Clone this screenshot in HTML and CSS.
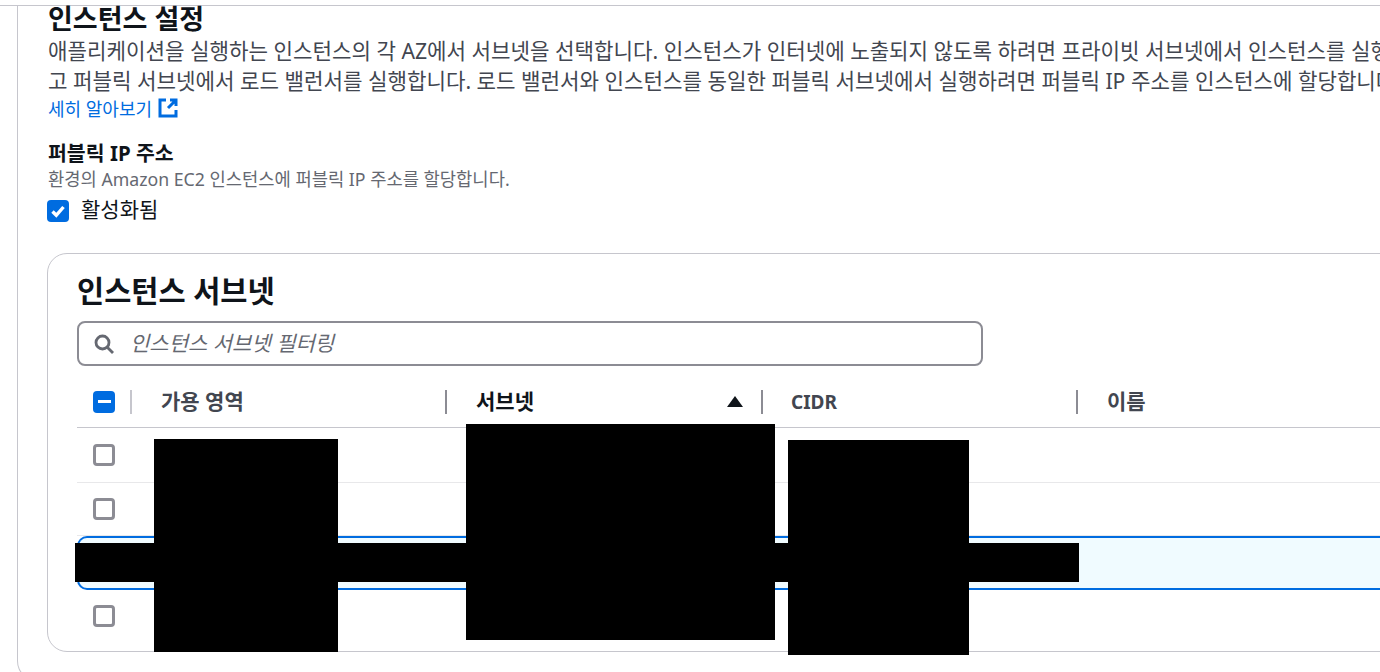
FILE: index.html
```html
<!DOCTYPE html>
<html lang="ko">
<head>
    <meta charset="UTF-8">
    <title>인스턴스 설정</title>
    <link rel="stylesheet" href="styles.css">
</head>
<body>
    <div class="top-line"></div>
    <div class="outer">
        <h2 class="title">인스턴스 설정</h2>
        <p class="desc">애플리케이션을 실행하는 인스턴스의 각 AZ에서 서브넷을 선택합니다. 인스턴스가 인터넷에 노출되지 않도록 하려면 프라이빗 서브넷에서 인스턴스를 실행하</p>
        <p class="desc">고 퍼블릭 서브넷에서 로드 밸런서를 실행합니다. 로드 밸런서와 인스턴스를 동일한 퍼블릭 서브넷에서 실행하려면 퍼블릭 IP 주소를 인스턴스에 할당합니다.</p>
        <a class="more" href="#">세히 알아보기
            <svg width="20" height="20" viewBox="0 0 20 20" fill="none" stroke="#006ce0" stroke-width="3">
                <path d="M8 2H2v16h16v-6"/>
                <path d="M12 2h6v6M18 2l-8 8"/>
            </svg>
        </a>

        <div class="field-label">퍼블릭 IP 주소</div>
        <div class="field-help">환경의 Amazon EC2 인스턴스에 퍼블릭 IP 주소를 할당합니다.</div>
        <label class="check-row">
            <span class="box checked">
                <svg width="22" height="22" viewBox="0 0 22 22" fill="none" stroke="#fff" stroke-width="3.4"><path d="M5.5 11.5l3.8 3.8L16.5 7"/></svg>
            </span>
            활성화됨
        </label>

        <div class="panel">
            <h3 class="panel-title">인스턴스 서브넷</h3>
            <div class="search">
                <svg width="22" height="22" viewBox="0 0 22 22" fill="none" stroke="#656871" stroke-width="2.8"><circle cx="9.5" cy="9.5" r="6.5"/><path d="M14 14l6 6"/></svg>
                <span>인스턴스 서브넷 필터링</span>
            </div>

            <div class="row head">
                <div class="cell-check"><span class="box checked"><i class="dash"></i></span></div>
                <div class="cell first">가용 영역</div>
                <div class="cell sorted">서브넷 <span class="sort"></span></div>
                <div class="cell latin">CIDR</div>
                <div class="cell">이름</div>
            </div>
            <div class="row tall"><div class="cell-check"><span class="box"></span></div></div>
            <div class="row short"><div class="cell-check"><span class="box"></span></div></div>
            <div class="row selected"></div>
            <div class="row last"><div class="cell-check"><span class="box"></span></div></div>
        </div>
    </div>

    <!-- 가려진 영역 -->
    <div class="mask m1"></div>
    <div class="mask m2"></div>
    <div class="mask m3"></div>
    <div class="mask m4"></div>
</body>
</html>
```

FILE: styles.css
```css
* {
    margin: 0;
    padding: 0;
    box-sizing: border-box;
}

html, body {
    height: 672px;
    overflow: hidden;
}

body {
    position: relative;
    background: #fff;
    color: #0f141a;
    font-family: "Noto Sans", "Noto Sans CJK KR", sans-serif;
}

.top-line {
    height: 6px;
    border-bottom: 1px solid #c6c6cd;
}

.outer {
    margin-left: 17px;
    width: 1500px;
    height: 675px;
    padding-left: 30px;
    border-left: 1px solid #c6c6cd;
    border-bottom: 1px solid #c6c6cd;
    border-bottom-left-radius: 20px;
}

.title {
    font-size: 27px;
    font-weight: 700;
    line-height: 26px;
    margin-bottom: 4px;
}

.desc {
    font-size: 21.2px;
    line-height: 30px;
    white-space: nowrap;
    color: #424650;
}

.more {
    display: flex;
    align-items: center;
    gap: 6px;
    height: 28px;
    margin-top: -2px;
    font-size: 18px;
    color: #006ce0;
    text-decoration: none;
}

.field-label {
    margin-top: 18px;
    font-size: 20.5px;
    font-weight: 700;
    line-height: 26px;
}

.field-help {
    font-size: 17.7px;
    line-height: 27px;
    color: #656871;
}

.check-row {
    display: flex;
    align-items: center;
    gap: 12px;
    height: 30px;
    font-size: 21px;
}

.check-row .box {
    margin-left: -1px;
    margin-top: 6px;
}

.box {
    display: inline-flex;
    align-items: center;
    justify-content: center;
    flex: none;
    width: 22px;
    height: 22px;
    border: 3px solid #8c8c94;
    border-radius: 4px;
    background: #fff;
}

.box.checked {
    border: 0;
    background: #006ce0;
}

.dash {
    width: 13px;
    height: 3px;
    background: #fff;
}

.panel {
    margin-top: 30px;
    margin-left: -1px;
    width: 1450px;
    height: 399px;
    padding: 0 29px;
    border: 1px solid #c6c6cd;
    border-radius: 20px;
}

.panel-title {
    font-size: 29.5px;
    font-weight: 700;
    line-height: 34px;
    margin-top: 20px;
}

.search {
    display: flex;
    align-items: center;
    gap: 15px;
    width: 906px;
    height: 45px;
    margin-top: 13px;
    padding-left: 14px;
    border: 2px solid #8c8c94;
    border-radius: 8px;
    font-size: 21px;
    font-style: italic;
    color: #656871;
}

.search span {
    margin-bottom: 4px;
}

.row {
    display: grid;
    grid-template-columns: 53px 315px 316px 315px 1fr;
    align-items: center;
    height: 54px;
    border-bottom: 1px solid #e8e8ea;
}

.row.head {
    height: 62px;
    padding-top: 10px;
    border-bottom-color: #c6c6cd;
}

.row.tall {
    height: 55px;
}

.row.short {
    height: 53px;
}

.row.selected {
    height: 54px;
    border: 2px solid #006ce0;
    border-right: 0;
    border-radius: 10px 0 0 10px;
    background: #f0fbff;
}

.row.last {
    height: 52px;
    border-bottom: 0;
}

.cell-check {
    padding-left: 16px;
    display: flex;
    align-items: center;
}

.cell {
    display: flex;
    align-items: center;
    height: 24px;
    padding-left: 29px;
    padding-right: 18px;
    padding-bottom: 4px;
    border-left: 2px solid #8c8c94;
    font-size: 21px;
    font-weight: 700;
    color: #424650;
}

.cell.first {
    border-left-color: #c6c6cd;
}

.cell.sorted {
    justify-content: space-between;
    color: #0f141a;
}

.cell.latin {
    padding-left: 28px;
    padding-bottom: 0;
    font-size: 19px;
}

.sort {
    width: 0;
    height: 0;
    margin-top: 4px;
    border-left: 8px solid transparent;
    border-right: 8px solid transparent;
    border-bottom: 11px solid #0f141a;
}

.mask {
    position: absolute;
    background: #000;
}

.m1 { left: 154px; top: 439px; width: 184px; height: 213px; }
.m2 { left: 466px; top: 424px; width: 309px; height: 216px; }
.m3 { left: 788px; top: 440px; width: 181px; height: 215px; }
.m4 { left: 75px; top: 543px; width: 1004px; height: 39px; }
```
